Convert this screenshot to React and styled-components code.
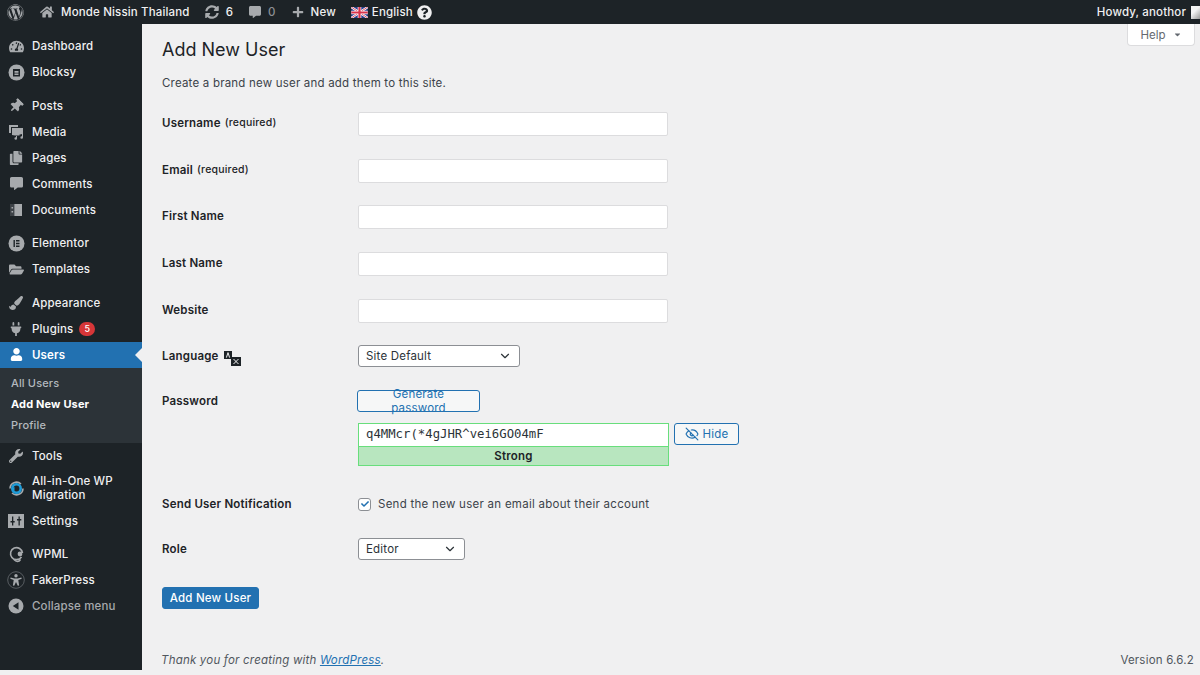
import React from 'react';
import styled, { createGlobalStyle } from 'styled-components';
import {
  FaWordpress, FaHome, FaTachometerAlt, FaThumbtack, FaCopy, FaCommentAlt, FaFolderOpen,
  FaPaintBrush, FaPlug, FaUser, FaWrench, FaPlus, FaQuestionCircle, FaSyncAlt, FaCheck, FaCaretDown,
} from 'react-icons/fa';
import { EyeOff, ChevronDown } from 'lucide-react';

const GlobalStyle = createGlobalStyle`
  html, body { margin: 0; padding: 0; background: #f0f0f1; }
  body { font-family: Inter, "Liberation Sans", sans-serif; font-size: 11.5px; color: #1d2327; }
  * { box-sizing: border-box; }
`;

const Page = styled.div`
  width: 1200px;
  height: 675px;
  overflow: hidden;
  display: flex;
  flex-direction: column;
`;

/* top bar */
const TopBar = styled.header`
  height: 24px;
  flex: none;
  background: #1d2327;
  display: flex;
  align-items: center;
  color: #f0f0f1;
  font-weight: 500;
  letter-spacing: 0.15px;
`;
const BarItem = styled.div`
  display: flex;
  align-items: center;
  gap: ${({ $gap }) => $gap ?? 7}px;
  margin-left: ${({ $ml }) => $ml ?? 0}px;
  color: ${({ $muted }) => ($muted ? '#8c8f94' : '#f0f0f1')};
  svg { color: #a7aaad; flex: none; }
`;
const Howdy = styled.div`
  margin-left: auto;
  display: flex;
  align-items: center;
  gap: 5px;
`;
const Avatar = styled.div`
  width: 9px;
  height: 13px;
  background: linear-gradient(135deg, #f4f4f4 40%, #9a9a9a);
`;

const Body = styled.div`
  flex: 1;
  display: flex;
  min-height: 0;
`;

/* sidebar */
const Sidebar = styled.nav`
  width: 142px;
  flex: none;
  height: 646px;
  background: #1d2327;
  padding-top: 9px;
  color: #f0f0f1;
  font-weight: 500;
  letter-spacing: 0.15px;
`;
const MenuItem = styled.div`
  position: relative;
  display: flex;
  align-items: center;
  min-height: ${({ $tall }) => ($tall ? 39 : 26)}px;
  margin-bottom: ${({ $sep }) => ($sep ? 7.6 : 0)}px;
  padding-left: 7px;
  line-height: 14px;
  background: ${({ $active }) => ($active ? '#2271b1' : 'transparent')};
  color: ${({ $active, $dim }) => ($active ? '#fff' : $dim ? '#a7aaad' : '#f0f0f1')};
  font-weight: ${({ $active }) => ($active ? 600 : 500)};
  ${({ $active }) =>
    $active &&
    `&::after {
      content: '';
      position: absolute;
      right: 0;
      top: 50%;
      margin-top: -7px;
      border: 7px solid transparent;
      border-right-color: #f0f0f1;
      border-left-width: 0;
    }`}
`;
const MenuIcon = styled.span`
  width: 18px;
  height: 18px;
  flex: none;
  margin-right: 7px;
  display: flex;
  align-items: center;
  justify-content: center;
  color: ${({ $active }) => ($active ? '#fff' : '#a7aaad')};
`;
const Count = styled.span`
  margin-left: 6px;
  width: 16px;
  height: 14px;
  border-radius: 8px;
  background: #d63638;
  color: #fff;
  font-size: 9px;
  line-height: 14px;
  text-align: center;
`;
const SubMenu = styled.div`
  background: #2c3338;
  height: 75px;
  padding-top: 5px;
`;
const SubItem = styled.div`
  height: 21.3px;
  line-height: 21.3px;
  padding-left: 11px;
  font-size: 11px;
  color: ${({ $current }) => ($current ? '#fff' : '#b4b9be')};
  font-weight: ${({ $current }) => ($current ? 700 : 500)};
`;

/* content */
const Main = styled.main`
  position: relative;
  flex: 1;
  display: flex;
  flex-direction: column;
  padding-left: 20px;
`;
const HelpTab = styled.div`
  position: absolute;
  top: 0;
  right: 5px;
  width: 68px;
  height: 22px;
  background: #fff;
  border: 1px solid #dcdcde;
  border-top: none;
  border-radius: 0 0 4px 4px;
  display: flex;
  align-items: center;
  justify-content: center;
  gap: 7px;
  color: #646970;
  svg { width: 9px; height: 9px; }
`;
const Title = styled.h1`
  margin: 14px 0 0;
  font-size: 18px;
  font-weight: 400;
  line-height: 24px;
`;
const Intro = styled.p`
  margin: 13px 0 0;
  line-height: 16px;
  color: #3c434a;
  letter-spacing: 0.2px;
`;
const Form = styled.form`
  margin-top: 21px;
`;
const Row = styled.div`
  display: grid;
  grid-template-columns: 196px 1fr;
  height: ${({ $h }) => $h}px;
`;
const Label = styled.label`
  font-weight: 600;
  line-height: 22px;
  letter-spacing: 0.2px;
  display: flex;
  align-items: flex-start;
  gap: 4px;
  small { font-size: 10.5px; font-weight: 500; }
  svg { margin-top: 6px; }
`;
const TextInput = styled.div`
  width: 310px;
  height: 24px;
  background: #fff;
  border: 1px solid #dcdcde;
  border-radius: 2px;
`;
const Select = styled.div`
  width: ${({ $w }) => $w}px;
  height: 22px;
  background: #fff;
  border: 1px solid #8c8f94;
  border-radius: 3px;
  padding: 0 7px;
  display: flex;
  align-items: center;
  justify-content: space-between;
  color: #2c3338;
  letter-spacing: 0.2px;
`;
const GhostButton = styled.button`
  height: 22px;
  padding: 0 9px;
  width: ${({ $w }) => $w}px;
  margin-left: ${({ $ml }) => $ml ?? 0}px;
  background: #f6f7f7;
  border: 1px solid #2271b1;
  border-radius: 3px;
  color: #2271b1;
  font: inherit;
  letter-spacing: 0.2px;
  display: flex;
  align-items: center;
  justify-content: center;
  gap: 4px;
`;
const PasswordWrap = styled.div`
  margin-top: 11px;
  display: flex;
  align-items: flex-start;
`;
const PasswordBox = styled.div`
  width: 311px;
  display: flex;
  flex-direction: column;
`;
const PasswordInput = styled.div`
  height: 24px;
  background: #fff;
  border: 1px solid #68de7c;
  padding-left: 7px;
  font-family: "DejaVu Sans Mono", monospace;
  font-size: 12.3px;
  line-height: 21px;
  color: #2c3338;
`;
const Strength = styled.div`
  height: 19px;
  background: #b8e6bf;
  border: 1px solid #68de7c;
  border-top: none;
  text-align: center;
  font-weight: 600;
  line-height: 18px;
  letter-spacing: 0.2px;
`;
const CheckLine = styled.div`
  display: flex;
  align-items: center;
  height: 22px;
  gap: 7px;
  color: #3c434a;
  letter-spacing: 0.27px;
`;
const CheckBox = styled.span`
  width: 13px;
  height: 13px;
  background: #fff;
  border: 1px solid #8c8f94;
  border-radius: 3px;
  display: flex;
  align-items: center;
  justify-content: center;
  color: #2271b1;
`;
const SubmitButton = styled.button`
  display: block;
  width: 97px;
  height: 22px;
  background: #2271b1;
  border: 1px solid #2271b1;
  border-radius: 3px;
  color: #fff;
  font: inherit;
  font-weight: 500;
  letter-spacing: 0.2px;
`;
const Footer = styled.footer`
  margin-top: auto;
  padding: 0 6px 7px 0;
  margin-left: -1px;
  display: flex;
  justify-content: space-between;
  line-height: 16px;
  color: #50575e;
  letter-spacing: 0.2px;
  em a { color: #2271b1; text-decoration: underline; }
`;

const Flag = () => (
  <svg width="17" height="11" viewBox="0 0 60 40">
    <rect width="60" height="40" fill="#2a3f8f" />
    <path d="M0 0L60 40M60 0L0 40" stroke="#fff" strokeWidth="8" />
    <path d="M0 0L60 40M60 0L0 40" stroke="#d8324a" strokeWidth="3" />
    <path d="M30 0V40M0 20H60" stroke="#fff" strokeWidth="13" />
    <path d="M30 0V40M0 20H60" stroke="#d8324a" strokeWidth="8" />
  </svg>
);
const MediaIcon = () => (
  <svg width="16" height="16" viewBox="0 0 16 16" fill="currentColor">
    <path d="M1 1h9v2H3v6H1z" />
    <path d="M4 4h11v5.2l-1-.2c-1.4 0-2.5 1-2.5 2.4H7l-3-.4z" />
    <path d="M9 12v2.4a1.3 1.3 0 1 1-1-1.2V12zM15 8.5v5a1.3 1.3 0 1 1-1-1.2V10l-2 .5V9z" />
  </svg>
);
const BlocksyIcon = () => (
  <svg width="17" height="17" viewBox="0 0 17 17">
    <circle cx="8.5" cy="8.5" r="8" fill="currentColor" />
    <path d="M5 5h7v7.5H5z" fill="#1d2327" />
    <path d="M6.5 7h4v1.8h-4zM6.5 9.6h4v1.5h-4z" fill="currentColor" />
  </svg>
);
const DocIcon = () => (
  <svg width="14" height="14" viewBox="0 0 14 14">
    <rect x="1" y="1" width="12" height="12" fill="currentColor" />
    <rect x="1" y="1" width="4.4" height="12" fill="#3d4247" />
    <path d="M2.5 4h1.6v1.4H2.5zM2.5 8h1.6v1.4H2.5z" fill="currentColor" />
  </svg>
);
const ElementorIcon = () => (
  <svg width="17" height="17" viewBox="0 0 17 17">
    <circle cx="8.5" cy="8.5" r="8" fill="currentColor" />
    <path d="M5.5 5h1.4v7H5.5zM8 5h3.5v1.4H8zM8 7.8h3.5v1.4H8zM8 10.6h3.5V12H8z" fill="#1d2327" />
  </svg>
);
const MigrationIcon = () => (
  <svg width="17" height="17" viewBox="0 0 17 17" fill="none">
    <path d="M2 8.5A6.5 6.5 0 0 1 13 4" stroke="#a7aaad" strokeWidth="1.6" />
    <path d="M15 8.5A6.5 6.5 0 0 1 4 13" stroke="#a7aaad" strokeWidth="1.6" />
    <circle cx="8.5" cy="8.5" r="4.2" stroke="#1e9bd7" strokeWidth="2.6" />
    <path d="M3 9l3.5-2v4z" fill="#1e9bd7" />
  </svg>
);
const SettingsIcon = () => (
  <svg width="16" height="14" viewBox="0 0 16 14">
    <rect width="16" height="14" fill="currentColor" />
    <path d="M4 2.5h1.3v9H4zM10.5 2.5h1.3v9h-1.3zM2.5 7h4.2v1.4H2.5zM9 5h4.3v1.4H9z" fill="#1d2327" />
  </svg>
);
const WpmlIcon = () => (
  <svg width="17" height="18" viewBox="0 0 17 18" fill="none">
    <path d="M13.5 12A6 6 0 1 1 14.5 8" stroke="currentColor" strokeWidth="1.6" />
    <circle cx="12" cy="9" r="2.4" fill="currentColor" />
    <path d="M6 14.5c2 2.5 5 2.5 6.5 0" stroke="currentColor" strokeWidth="1.5" />
  </svg>
);
const FakerIcon = () => (
  <svg width="18" height="18" viewBox="0 0 18 18">
    <circle cx="9" cy="9" r="8.3" fill="none" stroke="#666b70" strokeWidth="0.8" />
    <circle cx="9" cy="4.8" r="1.7" fill="#a7aaad" />
    <path d="M3.6 6.6l3.8.9h3.2l3.8-.9.3 1.2-3.4 1.2.8 5.4-1.3.3L9 10.9l-1.8 3.8-1.3-.3.8-5.4-3.4-1.2z" fill="#a7aaad" />
  </svg>
);
const CollapseIcon = () => (
  <svg width="16" height="16" viewBox="0 0 16 16">
    <circle cx="8" cy="8" r="7.5" fill="currentColor" />
    <path d="M10.5 4.2v7.6L4.8 8z" fill="#1d2327" />
  </svg>
);
const LangIcon = () => (
  <svg width="18" height="15" viewBox="0 0 18 15">
    <path d="M1 0h8v8H1z" fill="#1d2327" />
    <path d="M3.4 6.6L5 1.6l1.6 5" stroke="#f0f0f1" fill="none" />
    <path d="M8 6h10v9H8z" fill="#1d2327" />
    <path d="M10.5 8l5 5M15.5 8l-5 5" stroke="#f0f0f1" />
  </svg>
);

const menuGroups = [
  [['Dashboard', <FaTachometerAlt size={15} />], ['Blocksy', <BlocksyIcon />]],
  [
    ['Posts', <FaThumbtack size={14} style={{ transform: 'rotate(45deg)' }} />],
    ['Media', <MediaIcon />],
    ['Pages', <FaCopy size={14} />],
    ['Comments', <FaCommentAlt size={13} />],
    ['Documents', <DocIcon />],
  ],
  [['Elementor', <ElementorIcon />], ['Templates', <FaFolderOpen size={15} />]],
];

const TEXT_ROWS = [
  ['Username', '(required)'],
  ['Email', '(required)'],
  ['First Name'],
  ['Last Name'],
  ['Website'],
];

export default function App() {
  return (
    <Page>
      <GlobalStyle />
      <TopBar>
        <BarItem $ml={7}><FaWordpress size={17} /></BarItem>
        <BarItem $ml={16}><FaHome size={14} />Monde Nissin Thailand</BarItem>
        <BarItem $ml={15}><FaSyncAlt size={14} />6</BarItem>
        <BarItem $ml={16} $muted><FaCommentAlt size={12} />0</BarItem>
        <BarItem $ml={16}><FaPlus size={12} />New</BarItem>
        <BarItem $ml={15} $gap={4}><Flag />English<FaQuestionCircle size={15} color="#f0f0f1" style={{ color: '#f0f0f1' }} /></BarItem>
        <Howdy>Howdy, anothor<Avatar /></Howdy>
      </TopBar>
      <Body>
        <Sidebar>
          {menuGroups.map((group) =>
            group.map(([name, icon], i) => (
              <MenuItem key={name} $sep={i === group.length - 1}>
                <MenuIcon>{icon}</MenuIcon>{name}
              </MenuItem>
            ))
          )}
          <MenuItem><MenuIcon><FaPaintBrush size={14} /></MenuIcon>Appearance</MenuItem>
          <MenuItem><MenuIcon><FaPlug size={14} /></MenuIcon>Plugins<Count>5</Count></MenuItem>
          <MenuItem $active><MenuIcon $active><FaUser size={13} /></MenuIcon>Users</MenuItem>
          <SubMenu>
            <SubItem>All Users</SubItem>
            <SubItem $current>Add New User</SubItem>
            <SubItem>Profile</SubItem>
          </SubMenu>
          <MenuItem><MenuIcon><FaWrench size={14} /></MenuIcon>Tools</MenuItem>
          <MenuItem $tall><MenuIcon><MigrationIcon /></MenuIcon>All-in-One WP<br />Migration</MenuItem>
          <MenuItem $sep><MenuIcon><SettingsIcon /></MenuIcon>Settings</MenuItem>
          <MenuItem><MenuIcon><WpmlIcon /></MenuIcon>WPML</MenuItem>
          <MenuItem><MenuIcon><FakerIcon /></MenuIcon>FakerPress</MenuItem>
          <MenuItem $dim><MenuIcon><CollapseIcon /></MenuIcon>Collapse menu</MenuItem>
        </Sidebar>
        <Main>
          <HelpTab>Help<FaCaretDown /></HelpTab>
          <Title>Add New User</Title>
          <Intro>Create a brand new user and add them to this site.</Intro>
          <Form as="div">
            {TEXT_ROWS.map(([label, note]) => (
              <Row key={label} $h={46.7}>
                <Label>{label}{note && <small>{note}</small>}</Label>
                <TextInput />
              </Row>
            ))}
            <Row $h={45}>
              <Label>Language<LangIcon /></Label>
              <Select $w={162}>Site Default<ChevronDown size={14} /></Select>
            </Row>
            <Row $h={103}>
              <Label>Password</Label>
              <div>
                <GhostButton $w={123} $ml={-1}>Generate password</GhostButton>
                <PasswordWrap>
                  <PasswordBox>
                    <PasswordInput>q4MMcr(*4gJHR^vei6GO04mF</PasswordInput>
                    <Strength>Strong</Strength>
                  </PasswordBox>
                  <GhostButton $w={65} $ml={5}><EyeOff size={14} />Hide</GhostButton>
                </PasswordWrap>
              </div>
            </Row>
            <Row $h={45}>
              <Label>Send User Notification</Label>
              <CheckLine>
                <CheckBox><FaCheck size={8} /></CheckBox>
                Send the new user an email about their account
              </CheckLine>
            </Row>
            <Row $h={49}>
              <Label>Role</Label>
              <Select $w={107}>Editor<ChevronDown size={14} /></Select>
            </Row>
            <SubmitButton>Add New User</SubmitButton>
          </Form>
          <Footer>
            <em>Thank you for creating with <a>WordPress</a>.</em>
            <span>Version 6.6.2</span>
          </Footer>
        </Main>
      </Body>
    </Page>
  );
}
